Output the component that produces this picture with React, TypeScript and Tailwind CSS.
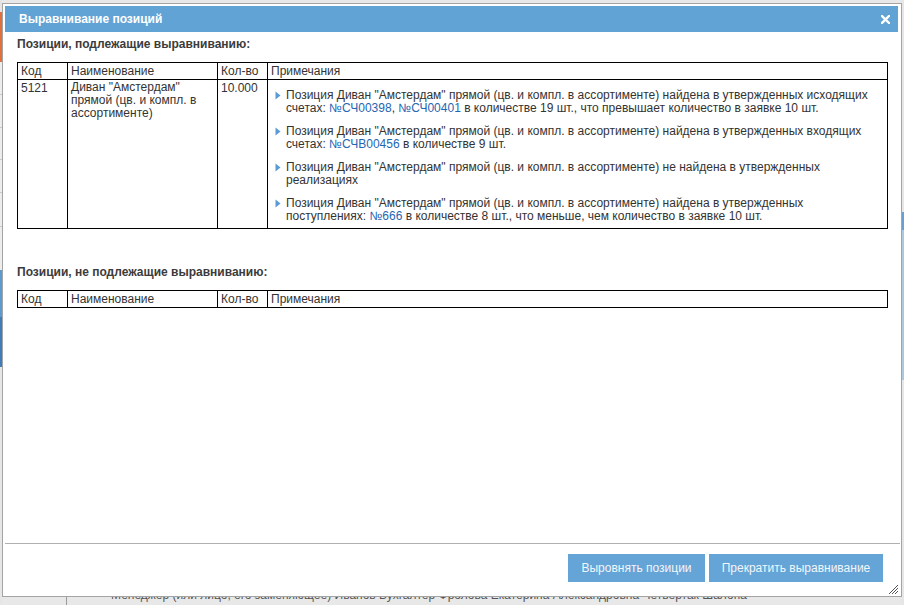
import React from "react";

function Tri() {
  return (
    <svg width="6" height="9" viewBox="0 0 6 9" className="shrink-0 mt-[2px]">
      <path d="M0.5 0.5 L5.5 4.5 L0.5 8.5 Z" fill="#5b9bd5" />
    </svg>
  );
}

function Note({ children }: { children: React.ReactNode }) {
  return (
    <li className="flex gap-[5px] items-start">
      <Tri />
      <div className="whitespace-nowrap leading-[13px]">{children}</div>
    </li>
  );
}

const L = ({ children }: { children: React.ReactNode }) => (
  <span className="text-[#1f66b3]">{children}</span>
);

function HeaderRow() {
  return (
    <tr className="h-[17px]">
      <td className="border border-black px-[3px] leading-[14px]">Код</td>
      <td className="border border-black px-[3px] leading-[14px]">Наименование</td>
      <td className="border border-black px-[3px] leading-[14px]">Кол-во</td>
      <td className="border border-black px-[3px] leading-[14px]">Примечания</td>
    </tr>
  );
}

function Cols() {
  return (
    <colgroup>
      <col className="w-[50px]" />
      <col className="w-[150px]" />
      <col className="w-[50px]" />
      <col />
    </colgroup>
  );
}

export default function App() {
  return (
    <div className="relative w-[904px] h-[605px] overflow-hidden bg-[#e8e8e8] font-['Liberation_Sans',Arial,sans-serif] text-[12px] text-[#333]">
      {/* background page, mostly hidden by the dialog */}
      <div className="flex h-full">
        <div className="w-[2px] flex flex-col shrink-0">
          <div className="h-[12px] bg-[#e4e4e4]" />
          <div className="h-[50px] bg-[#e2703d]" />
          <div className="h-[33px] bg-[#ededed] border-b border-[#c9c9c9]" />
          <div className="h-[33px] bg-[#ededed] border-b border-[#c9c9c9]" />
          <div className="h-[32px] bg-[#ededed] border-b border-[#c9c9c9]" />
          <div className="h-[33px] bg-[#ededed] border-b border-[#c9c9c9]" />
          <div className="h-[34px] bg-[#ededed] border-b border-[#c9c9c9]" />
          <div className="h-[43px] bg-[#ededed]" />
          <div className="h-[47px] bg-[#5b9bd0]" />
          <div className="h-[50px] bg-[#3f7cb8]" />
          <div className="flex-1 bg-[#e6e6e6]" />
        </div>
        <div className="flex-1 flex flex-col">
          <div className="flex-1" />
          <div className="h-[14px] flex items-start">
            <div className="w-[65px] h-full border-r border-[#9a9a9a]" />
            <div className="ml-[22px] mt-[-3px] flex items-center gap-[8px] whitespace-nowrap text-[#555] leading-[14px]">
              <span className="w-[14px] h-[1px] bg-[#666]" />
              <span>Менеджер (или лицо, его заменяющее) Иванов Бухгалтер Фролова Екатерина Александровна Четвертак Шалопа</span>
            </div>
          </div>
        </div>
        <div className="w-[3px] flex flex-col shrink-0">
          <div className="h-[212px] bg-[#e6e6e6]" />
          <div className="h-[18px] bg-[#6aa0d0]" />
          <div className="h-[150px] bg-[#aac8e0]" />
          <div className="flex-1 bg-[#e6e6e6]" />
        </div>
      </div>

      {/* dialog window */}
      <div className="absolute left-[2px] top-[3px] w-[900px] h-[594px] border border-[#a4a4a4] bg-white flex flex-col">
        <div className="mx-[2px] mt-[2px] mr-[3px] h-[26px] bg-[#62a3d5] flex items-center justify-between pl-[14px] pr-[8px]">
          <span className="text-white font-bold text-[12px]">Выравнивание позиций</span>
          <svg width="9" height="9" viewBox="0 0 9 9">
            <path d="M1 1 L8 8 M8 1 L1 8" stroke="#fff" strokeWidth="2.4" strokeLinecap="square" />
          </svg>
        </div>

        <div className="flex-1 pl-[14px] pr-[13px]">
          <div className="mt-[4px] h-[16px] leading-[16px] font-bold text-[#3b3b3b]">
            Позиции, подлежащие выравниванию:
          </div>
          <table className="mt-[10px] w-full table-fixed border-collapse border border-black text-[#333]">
            <Cols />
            <tbody>
              <HeaderRow />
              <tr>
                <td className="border border-black px-[3px] pt-[2px] align-top leading-[13px]">5121</td>
                <td className="border border-black px-[3px] pt-[1px] align-top leading-[13px]">
                  Диван "Амстердам" прямой (цв. и компл. в ассортименте)
                </td>
                <td className="border border-black px-[3px] pt-[2px] align-top leading-[13px]">10.000</td>
                <td className="border border-black pl-[7px] pt-[9px] pb-[5px] align-top">
                  <ul className="flex flex-col gap-[10px]">
                    <Note>
                      Позиция Диван "Амстердам" прямой (цв. и компл. в ассортименте) найдена в утвержденных исходящих
                      <br />
                      счетах: <L>№СЧ00398</L>, <L>№СЧ00401</L> в количестве 19 шт., что превышает количество в заявке 10 шт.
                    </Note>
                    <Note>
                      Позиция Диван "Амстердам" прямой (цв. и компл. в ассортименте) найдена в утвержденных входящих
                      <br />
                      счетах: <L>№СЧВ00456</L> в количестве 9 шт.
                    </Note>
                    <Note>
                      Позиция Диван "Амстердам" прямой (цв. и компл. в ассортименте) не найдена в утвержденных
                      <br />
                      реализациях
                    </Note>
                    <Note>
                      Позиция Диван "Амстердам" прямой (цв. и компл. в ассортименте) найдена в утвержденных
                      <br />
                      поступлениях: <L>№666</L> в количестве 8 шт., что меньше, чем количество в заявке 10 шт.
                    </Note>
                  </ul>
                </td>
              </tr>
            </tbody>
          </table>

          <div className="mt-[35px] h-[16px] leading-[16px] font-bold text-[#3b3b3b]">
            Позиции, не подлежащие выравниванию:
          </div>
          <table className="mt-[10px] w-full table-fixed border-collapse border border-black text-[#333]">
            <Cols />
            <tbody>
              <HeaderRow />
            </tbody>
          </table>
        </div>

        <div className="ml-[2px] mr-[1px] border-t border-[#b0b0b0] h-[53px] flex items-start justify-end gap-[4px] pt-[10px] pr-[17px] relative">
          <button className="h-[28px] w-[137px] bg-[#64a4d6] text-[#f2f6fa] text-[12px]">Выровнять позиции</button>
          <button className="h-[28px] w-[174px] bg-[#64a4d6] text-[#f2f6fa] text-[12px]">Прекратить выравнивание</button>
          <svg width="11" height="11" viewBox="0 0 11 11" className="absolute right-[1px] bottom-[1px]">
            <path d="M10 1 L1 10 M10 4 L4 10 M10 7 L7 10" stroke="#555" strokeWidth="1" />
          </svg>
        </div>
      </div>
    </div>
  );
}
